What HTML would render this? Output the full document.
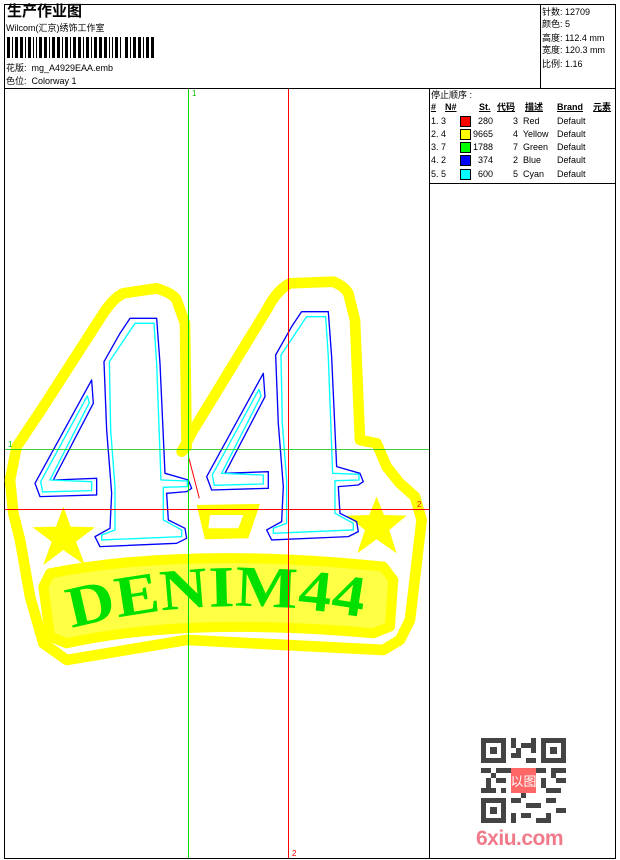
<!DOCTYPE html>
<html><head><meta charset="utf-8"><style>
*{margin:0;padding:0}
body{width:620px;height:860px;background:#fff;position:relative;overflow:hidden;font-family:"Liberation Sans","Noto Sans CJK SC",sans-serif;color:#000}
.a{position:absolute;white-space:nowrap}
.s{font-size:9px;line-height:10px}
.ln{position:absolute;background:#000}
</style></head><body>
<div class="ln" style="left:4px;top:4px;width:612px;height:1px"></div>
<div class="ln" style="left:4px;top:858px;width:612px;height:1px"></div>
<div class="ln" style="left:4px;top:4px;width:1px;height:855px"></div>
<div class="ln" style="left:615px;top:4px;width:1px;height:855px"></div>
<div class="ln" style="left:4px;top:88px;width:612px;height:1px"></div>
<div class="ln" style="left:540px;top:4px;width:1px;height:84px"></div>
<div class="ln" style="left:429px;top:88px;width:1px;height:771px"></div>
<div class="ln" style="left:429px;top:183px;width:187px;height:1px"></div>

<div class="a" style="left:7px;top:3px;font-size:15px;font-weight:bold;line-height:18px">生产作业图</div>
<div class="a s" style="left:6px;top:23px">Wilcom(汇京)绣饰工作室</div>
<svg class="a" style="left:7px;top:37px" width="150" height="21" viewBox="0 0 150 21">
<g fill="#000">
<rect x="0" y="0" width="3" height="21"/><rect x="5" y="0" width="1" height="21"/><rect x="8" y="0" width="3" height="21"/><rect x="13" y="0" width="3" height="21"/><rect x="18" y="0" width="1" height="21"/><rect x="21" y="0" width="3" height="21"/><rect x="26" y="0" width="1" height="21"/><rect x="29" y="0" width="1" height="21"/><rect x="32" y="0" width="3" height="21"/><rect x="37" y="0" width="3" height="21"/><rect x="42" y="0" width="1" height="21"/><rect x="45" y="0" width="3" height="21"/><rect x="50" y="0" width="3" height="21"/><rect x="55" y="0" width="1" height="21"/><rect x="58" y="0" width="3" height="21"/><rect x="63" y="0" width="1" height="21"/><rect x="66" y="0" width="3" height="21"/><rect x="71" y="0" width="3" height="21"/><rect x="76" y="0" width="1" height="21"/><rect x="79" y="0" width="3" height="21"/><rect x="84" y="0" width="1" height="21"/><rect x="87" y="0" width="3" height="21"/><rect x="92" y="0" width="3" height="21"/><rect x="97" y="0" width="3" height="21"/><rect x="102" y="0" width="1" height="21"/><rect x="105" y="0" width="1" height="21"/><rect x="108" y="0" width="3" height="21"/><rect x="113" y="0" width="1" height="21"/><rect x="118" y="0" width="3" height="21"/><rect x="123" y="0" width="1" height="21"/><rect x="126" y="0" width="3" height="21"/><rect x="131" y="0" width="3" height="21"/><rect x="136" y="0" width="1" height="21"/><rect x="139" y="0" width="3" height="21"/><rect x="144" y="0" width="3" height="21"/>
</g></svg>
<div class="a s" style="left:6px;top:63px">花版:&nbsp; mg_A4929EAA.emb</div>
<div class="a s" style="left:6px;top:76px">色位:&nbsp; Colorway 1</div>

<div class="a s" style="left:542px;top:7px">针数: 12709</div>
<div class="a s" style="left:542px;top:19px">颜色: 5</div>
<div class="a s" style="left:542px;top:33px">高度: 112.4 mm</div>
<div class="a s" style="left:542px;top:45px">宽度: 120.3 mm</div>
<div class="a s" style="left:542px;top:59px">比例: 1.16</div>

<div class="a s" style="left:431px;top:90px">停止顺序 :</div>
<div class="a s" style="left:431px;top:102px;font-weight:bold;text-decoration:underline">#</div>
<div class="a s" style="left:445px;top:102px;font-weight:bold;text-decoration:underline">N#</div>
<div class="a s" style="left:479px;top:102px;font-weight:bold;text-decoration:underline">St.</div>
<div class="a s" style="left:497px;top:102px;font-weight:bold;text-decoration:underline">代码</div>
<div class="a s" style="left:525px;top:102px;font-weight:bold;text-decoration:underline">描述</div>
<div class="a s" style="left:557px;top:102px;font-weight:bold;text-decoration:underline">Brand</div>
<div class="a s" style="left:593px;top:102px;font-weight:bold;text-decoration:underline">元素</div>
<div class="a s" style="left:431px;top:116px">1. 3</div><div class="a" style="left:460px;top:116px;width:9px;height:9px;border:1px solid #000;background:#f00"></div><div class="a s" style="left:470px;top:116px;width:23px;text-align:right">280</div><div class="a s" style="left:513px;top:116px">3&nbsp; Red</div><div class="a s" style="left:557px;top:116px">Default</div>
<div class="a s" style="left:431px;top:129px">2. 4</div><div class="a" style="left:460px;top:129px;width:9px;height:9px;border:1px solid #000;background:#ff0"></div><div class="a s" style="left:470px;top:129px;width:23px;text-align:right">9665</div><div class="a s" style="left:513px;top:129px">4&nbsp; Yellow</div><div class="a s" style="left:557px;top:129px">Default</div>
<div class="a s" style="left:431px;top:142px">3. 7</div><div class="a" style="left:460px;top:142px;width:9px;height:9px;border:1px solid #000;background:#0f0"></div><div class="a s" style="left:470px;top:142px;width:23px;text-align:right">1788</div><div class="a s" style="left:513px;top:142px">7&nbsp; Green</div><div class="a s" style="left:557px;top:142px">Default</div>
<div class="a s" style="left:431px;top:155px">4. 2</div><div class="a" style="left:460px;top:155px;width:9px;height:9px;border:1px solid #000;background:#00f"></div><div class="a s" style="left:470px;top:155px;width:23px;text-align:right">374</div><div class="a s" style="left:513px;top:155px">2&nbsp; Blue</div><div class="a s" style="left:557px;top:155px">Default</div>
<div class="a s" style="left:431px;top:169px">5. 5</div><div class="a" style="left:460px;top:169px;width:9px;height:9px;border:1px solid #000;background:#0ff"></div><div class="a s" style="left:470px;top:169px;width:23px;text-align:right">600</div><div class="a s" style="left:513px;top:169px">5&nbsp; Cyan</div><div class="a s" style="left:557px;top:169px">Default</div>

<svg class="a" style="left:0;top:0" width="429" height="860" viewBox="0 0 429 860">
<g transform="translate(0,280) scale(0.3333)">
 <path d="M30,600 L50,500 L130,380 L310,100 Q340,55 370,40 L470,25 Q520,40 530,60 L555,130 L560,500 L545,515 L580,450 L800,90 Q830,30 870,10 L1000,5 Q1035,20 1045,40 L1065,120 L1080,480 L1130,490 L1160,560 L1200,610 L1245,650 L1265,720 L1250,850 L1230,1020 L1200,1080 L1150,1110 L560,1080 L200,1140 L130,1090 L90,950 L60,780 L40,700 Z" fill="none" stroke="#ffff00" stroke-width="32" stroke-linejoin="round"/>
 <path d="M130,920 L150,880 Q560,800 1150,860 L1180,900 L1170,1040 L1120,1060 Q560,1010 200,1090 L150,1070 Z" fill="#ffff44" stroke="#ffff00" stroke-width="30" stroke-linejoin="round"/>
 <path d="M190,680 L212,740 L285,742 L228,785 L255,855 L190,810 L130,855 L155,785 L98,742 L168,740 Z" fill="#ffff00"/>
 <path d="M1130,650 L1152,705 L1220,707 L1168,750 L1190,820 L1130,778 L1072,820 L1095,750 L1040,707 L1108,705 Z" fill="#ffff00"/>
 <path d="M590,675 L780,672 L745,775 L615,778 Z M630,705 L625,745 L715,745 L730,705 Z" fill="#ffff00" fill-rule="evenodd"/>
 <g id="four" fill="none" stroke-width="4" stroke-linejoin="round">
  <g stroke="#0000ff">
  <path d="M275,300 L280,370 L160,600 L290,595 L290,645 L120,650 L105,610 Z"/>
  <path d="M390,115 L470,115 L480,250 L495,580 L565,600 L575,625 L560,635 L500,640 L505,720 L555,745 L560,775 L530,790 L300,800 L285,770 L330,745 L335,640 L320,450 L312,245 L360,160 Z"/>
  </g>
  <g stroke="#00ffff">
  <path d="M262,348 L268,368 L150,600 L275,605 L275,632 L128,636 L122,605 Z"/>
  <path d="M405,130 L462,130 L470,250 L483,600 L562,603 L562,620 L490,622 L490,720 L545,750 L545,770 L305,780 L305,765 L345,750 L345,620 L332,450 L328,245 Z"/>
  </g>
 </g>
 <use href="#four" transform="translate(515,-20)"/>
 <line x1="567" y1="535" x2="598" y2="655" stroke="#f00" stroke-width="3"/>
 <defs><path id="arc" d="M215,1045 Q640,930 1105,1015"/></defs>
 <text font-family="Liberation Serif,serif" font-weight="bold" font-size="175" fill="#00e000"><textPath href="#arc" textLength="880" lengthAdjust="spacingAndGlyphs">DENIM44</textPath></text>
</g>
<line x1="188.5" y1="89" x2="188.5" y2="858" stroke="#00e000"/>
<line x1="288.5" y1="89" x2="288.5" y2="858" stroke="#f00"/>
<line x1="5" y1="449.5" x2="429" y2="449.5" stroke="#00c000" stroke-width="0.8"/>
<line x1="5" y1="509.5" x2="429" y2="509.5" stroke="#f00"/>
<text x="192" y="96" font-size="8" fill="#00c000" font-family="Liberation Sans">1</text>
<text x="8" y="447" font-size="8" fill="#00c000" font-family="Liberation Sans">1</text>
<text x="417" y="507" font-size="8" fill="#f00" font-family="Liberation Sans">2</text>
<text x="292" y="856" font-size="8" fill="#f00" font-family="Liberation Sans">2</text>
</svg>

<svg class="a" style="left:481px;top:738px" width="85" height="85" viewBox="0 0 17 17">
<g fill="#444">
<path d="M0,0h5v5h-5z M1,1v3h3v-3z M1.8,1.8h1.4v1.4h-1.4z" fill-rule="evenodd"/>
<path d="M12,0h5v5h-5z M13,1v3h3v-3z M13.8,1.8h1.4v1.4h-1.4z" fill-rule="evenodd"/>
<path d="M0,12h5v5h-5z M1,13v3h3v-3z M1.8,13.8h1.4v1.4h-1.4z" fill-rule="evenodd"/>
<rect x="6" y="0" width="1" height="2"/><rect x="8" y="1" width="2" height="1"/><rect x="10" y="0" width="1" height="3"/><rect x="6" y="3" width="2" height="1"/><rect x="9" y="4" width="2" height="1"/><rect x="7" y="2" width="1" height="1"/>
<rect x="0" y="6" width="2" height="1"/><rect x="3" y="6" width="3" height="1"/><rect x="1" y="8" width="1" height="2"/><rect x="3" y="8" width="2" height="1"/><rect x="0" y="10" width="3" height="1"/><rect x="4" y="10" width="1" height="1"/><rect x="2" y="7" width="1" height="1"/>
<rect x="11" y="6" width="2" height="1"/><rect x="14" y="6" width="3" height="1"/><rect x="12" y="8" width="1" height="2"/><rect x="15" y="8" width="2" height="1"/><rect x="13" y="10" width="3" height="1"/><rect x="14" y="7" width="1" height="1"/>
<rect x="6" y="12" width="2" height="1"/><rect x="9" y="13" width="3" height="1"/><rect x="6" y="15" width="1" height="2"/><rect x="8" y="15" width="2" height="1"/><rect x="11" y="16" width="2" height="1"/><rect x="13" y="12" width="2" height="1"/><rect x="15" y="14" width="2" height="1"/><rect x="13" y="15" width="1" height="2"/><rect x="8" y="11" width="1" height="1"/>
</g>
<rect x="6" y="6" width="5" height="5" fill="#f66"/>
<text x="8.5" y="9.6" font-size="2.6" fill="#fff" text-anchor="middle" font-family="Noto Sans CJK SC,sans-serif">以图</text>
</svg>
<div class="a" style="left:476px;top:827px;font-size:21px;font-weight:bold;color:#f07a8a;letter-spacing:-0.5px">6xiu.com</div>
</body></html>
